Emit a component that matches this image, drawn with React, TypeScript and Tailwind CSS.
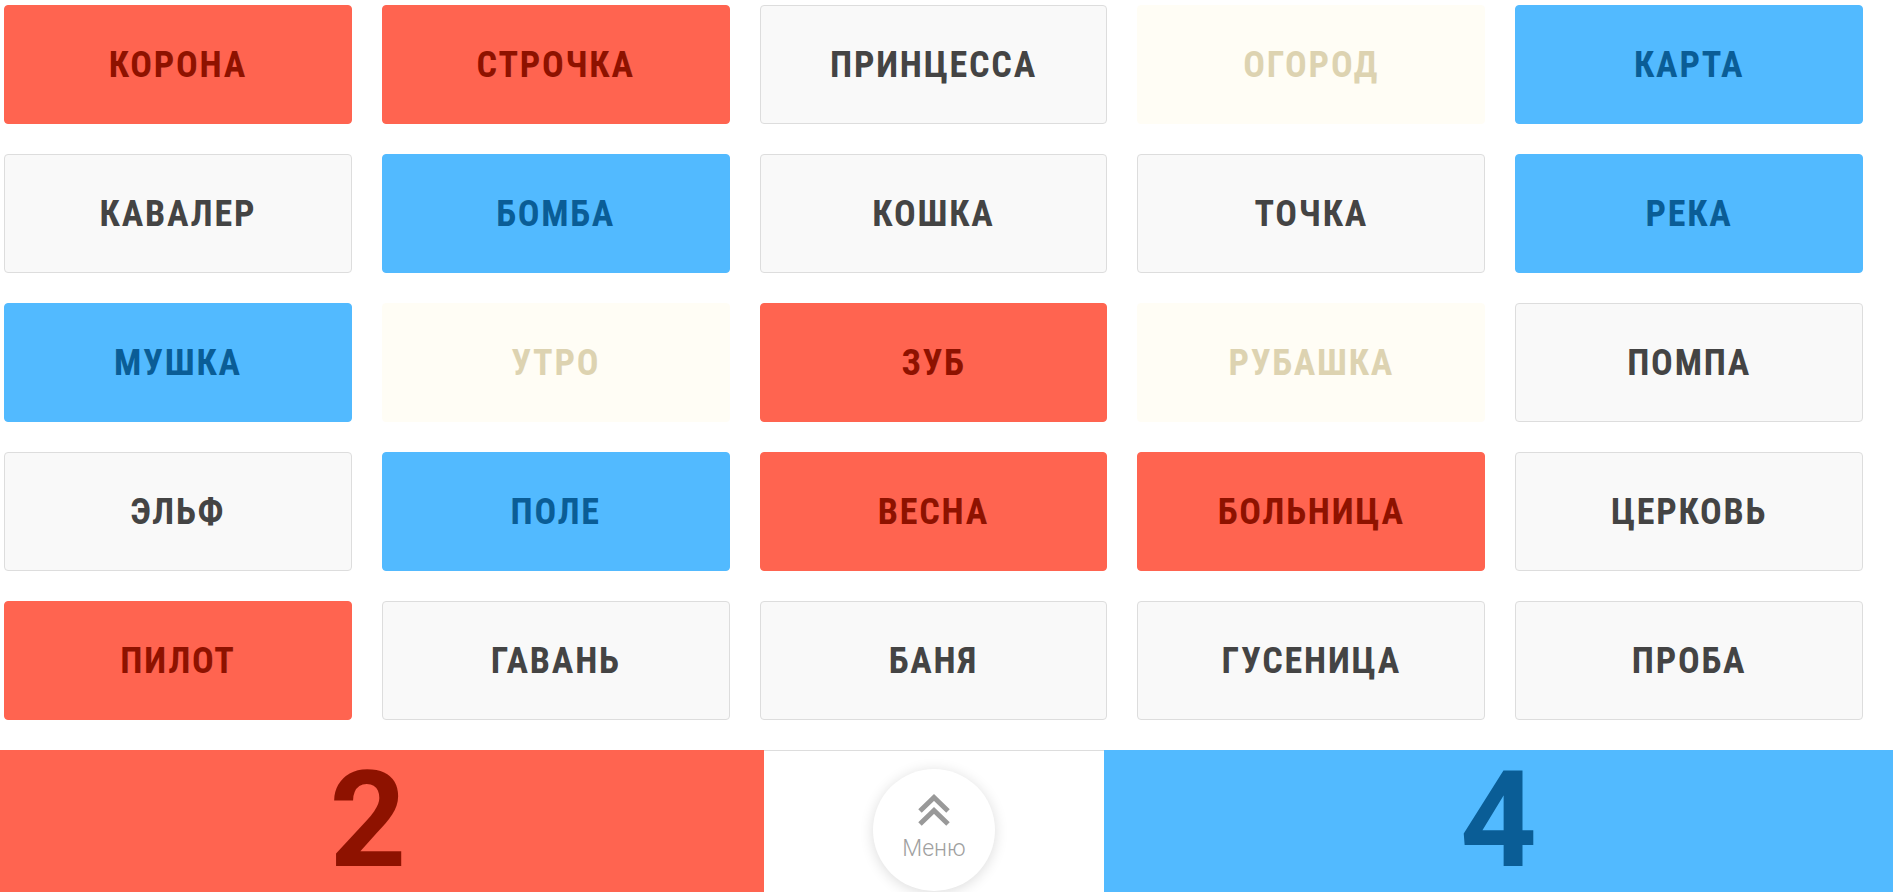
import React from 'react';

type Team = 'red' | 'blue' | 'neutral' | 'killer';

const CARDS: { word: string; team: Team }[] = [
  { word: 'КОРОНА', team: 'red' },
  { word: 'СТРОЧКА', team: 'red' },
  { word: 'ПРИНЦЕССА', team: 'neutral' },
  { word: 'ОГОРОД', team: 'killer' },
  { word: 'КАРТА', team: 'blue' },
  { word: 'КАВАЛЕР', team: 'neutral' },
  { word: 'БОМБА', team: 'blue' },
  { word: 'КОШКА', team: 'neutral' },
  { word: 'ТОЧКА', team: 'neutral' },
  { word: 'РЕКА', team: 'blue' },
  { word: 'МУШКА', team: 'blue' },
  { word: 'УТРО', team: 'killer' },
  { word: 'ЗУБ', team: 'red' },
  { word: 'РУБАШКА', team: 'killer' },
  { word: 'ПОМПА', team: 'neutral' },
  { word: 'ЭЛЬФ', team: 'neutral' },
  { word: 'ПОЛЕ', team: 'blue' },
  { word: 'ВЕСНА', team: 'red' },
  { word: 'БОЛЬНИЦА', team: 'red' },
  { word: 'ЦЕРКОВЬ', team: 'neutral' },
  { word: 'ПИЛОТ', team: 'red' },
  { word: 'ГАВАНЬ', team: 'neutral' },
  { word: 'БАНЯ', team: 'neutral' },
  { word: 'ГУСЕНИЦА', team: 'neutral' },
  { word: 'ПРОБА', team: 'neutral' },
];

const CARD_STYLE: Record<Team, string> = {
  red: 'bg-[#ff6450] text-[#8e1200] border-[#ff6450]',
  blue: 'bg-[#52baff] text-[#0a5d96] border-[#52baff]',
  neutral: 'bg-[#f9f9f9] text-[#444444] border-[#dddddd]',
  killer: 'bg-[#fffdf5] text-[#ddd3b1] border-[#fffdf5]',
};

const Card: React.FC<{ word: string; team: Team }> = ({ word, team }) => (
  <div
    className={`h-[119px] flex items-center justify-center rounded-[4px] border ${CARD_STYLE[team]}`}
  >
    <span className="text-[36px] font-bold leading-none tracking-[1.8px] [font-stretch:condensed]">
      {word}
    </span>
  </div>
);

const App: React.FC = () => {
  return (
    <div
      className="w-[1893px] h-[892px] bg-white overflow-hidden flex flex-col"
      style={{ fontFamily: '"Roboto Condensed", Roboto, "Liberation Sans", sans-serif' }}
    >
      {/* Board */}
      <div className="grid grid-cols-5 gap-x-[30px] gap-y-[30px] pl-[4px] pr-[30px] pt-[5px]">
        {CARDS.map((c, idx) => (
          <Card key={idx} word={c.word} team={c.team} />
        ))}
      </div>

      {/* Score bar */}
      <div className="mt-[30px] flex h-[142px]">
        <div className="w-[764px] bg-[#ff6450] flex items-center justify-center pr-[28px]">
          <span className="text-[134px] font-bold leading-none text-[#8e1200]" style={{ fontFamily: 'Roboto, sans-serif' }}>
            2
          </span>
        </div>
        <div className="w-[340px] border-t border-[#dddddd] flex justify-center pt-[18px]">
          <button className="w-[122px] h-[122px] rounded-full bg-white shadow-[0_2px_14px_rgba(0,0,0,0.14)] flex flex-col items-center pt-[25px]">
            <svg width="34" height="33" viewBox="0 0 34 33" fill="none" stroke="#999999" strokeWidth="5">
              <path d="M3 17 L17 3.5 L31 17" />
              <path d="M3 30 L17 16.5 L31 30" />
            </svg>
            <span className="mt-[10px] text-[23px] font-light leading-none text-[#a0a0a0]" style={{ fontFamily: 'Roboto, sans-serif' }}>
              Меню
            </span>
          </button>
        </div>
        <div className="flex-1 bg-[#52baff] flex items-center justify-center">
          <span className="text-[134px] font-bold leading-none text-[#0a5d96]" style={{ fontFamily: 'Roboto, sans-serif' }}>
            4
          </span>
        </div>
      </div>
    </div>
  );
};

export default App;
